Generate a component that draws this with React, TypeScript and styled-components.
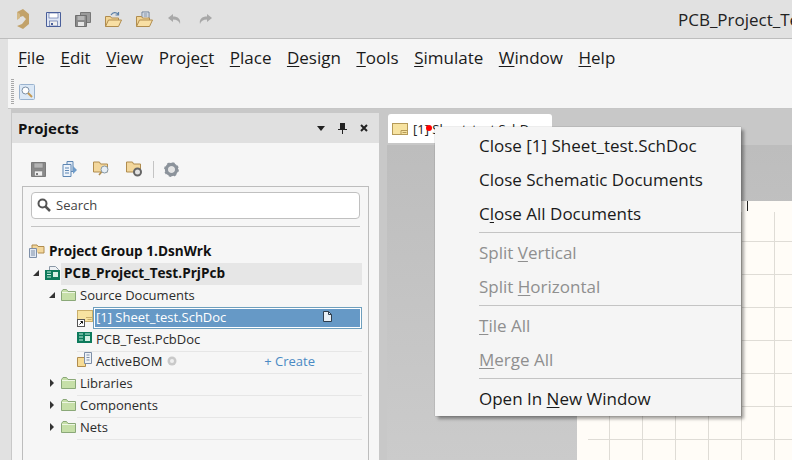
import React from 'react'
import styled, { createGlobalStyle } from 'styled-components'

const GlobalStyle = createGlobalStyle`
  html, body {
    margin: 0;
    padding: 0;
    width: 792px;
    height: 460px;
    overflow: hidden;
    background: #e1e1e1;
    font-family: 'Open Sans', 'Liberation Sans', sans-serif;
  }
  #root { width: 792px; height: 460px; }
  svg { flex: none; display: block; }
`

const Shell = styled.div`
  position: relative;
  width: 792px;
  height: 460px;
  overflow: hidden;
  display: flex;
  flex-direction: column;
  background: #e1e1e1;
`

const TitleBar = styled.div`
  height: 38px;
  flex: none;
  display: flex;
  align-items: center;
  padding-left: 16px;
  gap: 14px;
  border-bottom: 1px solid #bdbdbd;
  white-space: nowrap;
`

const Logo = styled.svg`
  margin-right: 2px;
`

const TitleText = styled.div`
  margin-left: auto;
  width: 114px;
  overflow: hidden;
  font-size: 17px;
  color: #222;
`

const MenuArea = styled.div`
  margin-left: 8px;
  height: 70px;
  flex: none;
  background: #f5f5f5;
  border-bottom: 1px solid #c6c6c6;
  box-sizing: border-box;
`

const MenuBar = styled.div`
  height: 37px;
  display: flex;
  align-items: center;
  gap: 15.5px;
  padding-left: 10px;
  font-size: 17px;
  color: #1a1a1a;
`

const MenuLabel = styled.span`
  u { text-underline-offset: 2px; }
`

const QuickBar = styled.div`
  display: flex;
  align-items: center;
  gap: 5px;
  padding: 3px 0 0 3px;
`

const Grip = styled.div`
  width: 3px;
  height: 25px;
  background: repeating-linear-gradient(to bottom, #a8a8a8 0 1px, transparent 1px 2px);
`

const Workspace = styled.div`
  flex: 1;
  display: flex;
  min-height: 0;
  margin-left: 11px;
  background: #c8c8c8;
  padding-top: 4px;
`

const Panel = styled.div`
  width: 367px;
  margin-left: 1px;
  flex: none;
  background: #f6f6f6;
  display: flex;
  flex-direction: column;
`

const PanelHeader = styled.div`
  height: 30px;
  flex: none;
  background: #e0e0e0;
  display: flex;
  align-items: center;
  padding-left: 6px;
  font-size: 15px;
  font-weight: 700;
  color: #111;
`

const PanelControls = styled.div`
  margin-left: auto;
  display: flex;
  align-items: center;
  gap: 13px;
  padding-right: 11px;
`

const PanelTools = styled.div`
  height: 43px;
  flex: none;
  display: flex;
  align-items: center;
  padding: 9px 0 0 19px;
  box-sizing: border-box;
  gap: 16px;
`

const ToolDivider = styled.div`
  width: 1px;
  height: 17px;
  background: #c4c4c4;
  margin: 0 -6px;
`

const PanelBody = styled.div`
  flex: 1;
  margin: 0 10px;
  border: 1px solid #bdbdbd;
  border-bottom: none;
  padding: 5px 8px 0;
`

const SearchBox = styled.div`
  height: 27px;
  box-sizing: border-box;
  border: 1px solid #c0c0c0;
  border-radius: 4px;
  background: #fff;
  display: flex;
  align-items: center;
  gap: 5px;
  padding: 0 0 2px 5px;
  font-size: 13px;
  color: #444;
`

const TreeRule = styled.div`
  margin-top: 7px;
  height: 1px;
  background: #c4c4c4;
`

const Tree = styled.div`
  margin: 14px -2px 0;
`

const Row = styled.div<{ $indent?: number; $bold?: boolean }>`
  height: 22px;
  display: flex;
  align-items: center;
  padding-left: ${({ $indent }) => $indent || 0}px;
  font-size: ${({ $bold }) => ($bold ? '13.6px' : '13px')};
  font-weight: ${({ $bold }) => ($bold ? 700 : 400)};
  color: ${({ $bold }) => ($bold ? '#111' : '#2b2b2b')};
`

const RowFill = styled.div<{ $shade?: boolean; $line?: boolean; $selected?: boolean; $pad?: number }>`
  flex: 1;
  height: 100%;
  display: flex;
  align-items: center;
  box-sizing: border-box;
  padding-left: ${({ $pad }) => ($pad === undefined ? 3 : $pad)}px;
  padding-bottom: 3px;
  min-width: 0;
  background: ${({ $shade, $selected }) => ($selected ? '#6699c6' : $shade ? '#e6e6e6' : 'transparent')};
  color: ${({ $selected }) => ($selected ? '#fff' : 'inherit')};
  box-shadow: ${({ $selected, $line }) =>
    $selected ? 'inset 0 0 0 1px #6e9fbd, inset 0 0 0 2px #fff' : $line ? '0 1px 0 #e6e6e6' : 'none'};
`

const Arrow = styled.span`
  width: 14px;
  margin-right: 2px;
  padding-bottom: 3px;
  flex: none;
  display: flex;
  justify-content: center;
`

const IconSlot = styled.span<{ $w?: number }>`
  width: ${({ $w }) => $w || 16}px;
  padding-bottom: 3px;
  flex: none;
  display: flex;
  align-items: center;
`

const LeafIcon = styled(IconSlot)`
  padding-bottom: 0;
`

const Hint = styled.span`
  margin-left: auto;
  padding-right: 30px;
  display: flex;
  align-items: center;
`

const HelpDot = styled.svg`
  margin-left: 5px;
`

const CreateLink = styled.span`
  margin-left: auto;
  padding-right: 47px;
  color: #4a8ac4;
`

const DocArea = styled.div`
  flex: 1;
  min-width: 0;
  margin-left: 8px;
  display: flex;
  flex-direction: column;
`

const TabStrip = styled.div`
  height: 32px;
  flex: none;
  display: flex;
  align-items: flex-start;
  padding: 1px 0 0 1px;
  box-sizing: border-box;
`

const Tab = styled.div`
  width: 164px;
  height: 29px;
  background: #fff;
  border-radius: 3px 3px 0 0;
  display: flex;
  align-items: center;
  gap: 5px;
  padding-left: 4px;
  box-sizing: border-box;
  font-size: 13px;
  color: #222;
  white-space: nowrap;
  overflow: hidden;
  position: relative;
`

const RedDot = styled.span`
  position: absolute;
  left: 38px;
  top: 11px;
  width: 6px;
  height: 6px;
  border-radius: 50%;
  background: #f00;
`

const DocBackdrop = styled.div`
  flex: 1;
  background: linear-gradient(to bottom, #bdbdbd, #cbcbcb);
  padding: 56px 0 0 190px;
  min-height: 0;
  overflow: hidden;
`

const Sheet = styled.div`
  height: 100%;
  box-sizing: border-box;
  padding: 11px 0 0 11px;
  background: #fffcf7;
  position: relative;
`

const SheetGrid = styled.div`
  height: 100%;
  background-image:
    linear-gradient(to right, #dfdcd6 1px, transparent 1px),
    linear-gradient(to bottom, #dfdcd6 1px, transparent 1px);
  background-size: 33px 33px;
  background-position: 21px 29px;
`

const Cursor = styled.span`
  position: absolute;
  left: 170px;
  top: 0;
  width: 1px;
  height: 10px;
  background: #222;
`

const ContextMenu = styled.div`
  position: absolute;
  left: 435px;
  top: 127px;
  width: 306px;
  height: 289px;
  box-sizing: border-box;
  background: #f5f5f5;
  box-shadow: 3px 3px 3px rgba(0, 0, 0, 0.35), 0 0 1px rgba(0, 0, 0, 0.4);
  padding-top: 1px;
`

const MenuItem = styled.div<{ $disabled?: boolean }>`
  height: 34px;
  display: flex;
  align-items: center;
  white-space: pre;
  padding-left: 44px;
  font-size: 17px;
  color: ${({ $disabled }) => ($disabled ? '#8f8f8f' : '#1a1a1a')};
  u { text-underline-offset: 2px; }
`

const MenuRule = styled.div`
  height: 1px;
  margin: 2px 0 2px 44px;
  background: #c4c4c4;
`

const SaveIcon = ({ color, w = 15, grey }: { color: string; w?: number; grey?: boolean }) => (
  <svg width={w} height={w} viewBox="0 0 15 15">
    <path d="M.5.5h14v14H.5z" fill={grey ? '#8a8a8a' : '#dfe6f4'} stroke={color} />
    <rect x="3" y="1" width="9" height="5" fill={grey ? '#b5b5b5' : '#fff'} stroke={color} strokeWidth=".6" />
    <rect x="3.5" y="9" width="8" height="5" fill="#efefef" stroke={color} strokeWidth=".6" />
    <rect x="5" y="11" width="2" height="2" fill={color} />
  </svg>
)

const DoubleSaveIcon = () => (
  <svg width="16" height="15" viewBox="0 0 16 15">
    <path d="M5.500.5h10v10h-10z" fill="#9a9a9a" stroke="#777" />
    <path d="M.5 3.500h11v11H.5z" fill="#8a8a8a" stroke="#6f6f6f" />
    <rect x="2.500" y="4" width="7" height="4" fill="#b5b5b5" />
    <rect x="3" y="10" width="6" height="4" fill="#e6e6e6" />
  </svg>
)

const OpenFolder = ({ badge }: { badge: 'arrow' | 'doc' }) => (
  <svg width="17" height="17" viewBox="0 0 17 17">
    {badge === 'arrow' ? (
      <path d="M6 4c2-3 5-3 7-1M13.500 1v3h-3" fill="none" stroke="#5b7fa6" strokeWidth="1.2" />
    ) : (
      <path d="M6 1h7v7H6z M7.500 3h4M7.500 5h4" fill="#eef2f8" stroke="#6c7f96" />
    )}
    <path d="M.5 15.500V5.500h5l1 1.500h7v2" fill="#f2d596" stroke="#b08c4e" />
    <path d="M.5 15.500l3-6.500h13l-3 6.500z" fill="#f8dfa4" stroke="#b08c4e" />
  </svg>
)

const GearIcon = () => (
  <svg width="15" height="15" viewBox="0 0 15 15">
    <circle cx="7.500" cy="7.500" r="5" fill="none" stroke="#8c939b" strokeWidth="3.400" />
    <circle cx="7.500" cy="7.500" r="6.300" fill="none" stroke="#8c939b" strokeWidth="2.200" strokeDasharray="2.300 2.650" />
    <circle cx="7.500" cy="7.500" r="3" fill="#e4e4e4" />
  </svg>
)

const GreenFolder = () => (
  <svg width="15" height="12" viewBox="0 0 15 12">
    <path d="M.5 11.500V2.500L2 .5h3.500L7 2.500h7.500v9z" fill="#c6dfa8" stroke="#8aa878" />
    <path d="M1 3.500h13" stroke="#eef6e4" />
  </svg>
)

const BoardIcon = () => (
  <svg width="15" height="11" viewBox="0 0 15 11">
    <rect width="15" height="11" fill="#0d7a5c" />
    <path d="M2 2h4M2 5h4M2 8h4M8 2h5" stroke="#c8efe0" strokeWidth="1" />
    <rect x="8" y="4" width="5" height="5" fill="#d6f1e6" />
  </svg>
)

const ProjectIcon = () => (
  <svg width="15" height="14" viewBox="0 0 15 14">
    <path d="M4.500.5h6l3 3v3h-9z" fill="#eef1f4" stroke="#8b98a6" />
    <rect y="4" width="15" height="10" fill="#0d7a5c" />
    <path d="M2 6h4M2 8.500h4M2 11h4" stroke="#c8efe0" />
    <rect x="8" y="6" width="5" height="5" fill="#d6f1e6" />
  </svg>
)

const Tri = ({ open }: { open?: boolean }) => (
  <svg width="7" height="8" viewBox="0 0 7 8">
    {open ? <path d="M6 1v6H0z" fill="#333" /> : <path d="M1 0l4 4-4 4z" fill="#333" />}
  </svg>
)

const SheetIcon = () => (
  <svg width="16" height="12" viewBox="0 0 16 12">
    <rect x=".5" y=".5" width="15" height="11" fill="#f7e3a1" stroke="#b59a58" />
    <path d="M9 7.500h6.500M9 7.500v4M10.500 9.500h4" stroke="#b59a58" fill="none" />
  </svg>
)

const ShortcutSheetIcon = () => (
  <svg width="16" height="17" viewBox="0 0 16 17">
    <rect x=".5" y=".5" width="15" height="11" fill="#f7e3a1" stroke="#c9ae6b" />
    <path d="M9 7.500h6.500M10.500 9.500h4" stroke="#c9ae6b" fill="none" />
    <rect x=".5" y="9.500" width="7" height="7" fill="#fff" stroke="#555" />
    <path d="M2.500 14.500l3-3M3.500 11.500h2v2" stroke="#111" fill="none" />
  </svg>
)

const MENU = [
  ['', 'F', 'ile'],
  ['', 'E', 'dit'],
  ['', 'V', 'iew'],
  ['Proje', 'c', 't'],
  ['', 'P', 'lace'],
  ['', 'D', 'esign'],
  ['', 'T', 'ools'],
  ['', 'S', 'imulate'],
  ['', 'W', 'indow'],
  ['', 'H', 'elp'],
]

const App = () => (
  <Shell>
    <GlobalStyle />
    <TitleBar>
      <Logo width="14" height="20" viewBox="0 0 14 20">
        <path d="M1 3l6-3 6 5v10l-6 5-6-3 5-2 4-5-3-3-3 1z" fill="#c2a26a" />
        <path d="M1 3l3 2v4l-3 2z" fill="#d3b987" />
      </Logo>
      <SaveIcon color="#4a5f9a" />
      <DoubleSaveIcon />
      <OpenFolder badge="arrow" />
      <OpenFolder badge="doc" />
      <svg width="16" height="12" viewBox="0 0 16 12">
        <path d="M6 1L1 5 6 9V6.500c4 0 6 1.500 7 4.500 1-5-2-7.500-7-7.500z" fill="#a8a8a8" />
      </svg>
      <svg width="16" height="12" viewBox="0 0 16 12">
        <path d="M10 1l5 4-5 4V6.500c-4 0-6 1.500-7 4.500-1-5 2-7.500 7-7.500z" fill="#a8a8a8" />
      </svg>
      <TitleText>PCB_Project_Test</TitleText>
    </TitleBar>
    <MenuArea>
      <MenuBar>
        {MENU.map(([before, key, after]) => (
          <MenuLabel key={key + after}>
            {before}
            <u>{key}</u>
            {after}
          </MenuLabel>
        ))}
      </MenuBar>
      <QuickBar>
        <Grip />
        <svg width="16" height="16" viewBox="0 0 16 16">
          <rect x=".5" y=".5" width="15" height="15" rx="1" fill="#dbe8f6" stroke="#9ab3cf" />
          <circle cx="6.500" cy="6.500" r="3.500" fill="#fff" stroke="#7b8fa6" />
          <path d="M9 9l4 4" stroke="#c69a52" strokeWidth="2" />
        </svg>
      </QuickBar>
    </MenuArea>
    <Workspace>
      <Panel>
        <PanelHeader>
          Projects
          <PanelControls>
            <svg width="8" height="5" viewBox="0 0 8 5">
              <path d="M0 0h8L4 5z" fill="#222" />
            </svg>
            <svg width="9" height="11" viewBox="0 0 9 11">
              <path d="M2 0h5v6h2v1H5v4H4V7H0V6h2z" fill="#222" />
            </svg>
            <svg width="8" height="8" viewBox="0 0 8 8">
              <path d="M1 1l6 6M7 1L1 7" stroke="#222" strokeWidth="2" />
            </svg>
          </PanelControls>
        </PanelHeader>
        <PanelTools>
          <SaveIcon color="#7b7b7b" grey />
          <svg width="15" height="16" viewBox="0 0 15 16">
            <path d="M5 .5h6v10H5z" fill="#dfe9f5" stroke="#5f87b3" />
            <path d="M1 3.500h8v12H1z" fill="#eef4fb" stroke="#5f87b3" />
            <path d="M3 7h4M3 9.500h4M3 12h4" stroke="#5f87b3" />
            <path d="M11 5l4 4-4 4z" fill="#6f9cc9" />
          </svg>
          <svg width="17" height="16" viewBox="0 0 17 16">
            <path d="M.5 11V1h6l1 2h7v8z" fill="#f3d79c" stroke="#b08c4e" />
            <circle cx="11.500" cy="8.500" r="3.500" fill="#e6eef5" stroke="#8799a6" />
            <path d="M8.500 11L6 14" stroke="#b08c4e" strokeWidth="1.500" />
          </svg>
          <svg width="17" height="16" viewBox="0 0 17 16">
            <path d="M.5 11V1h6l1 2h7v8z" fill="#f3d79c" stroke="#b08c4e" />
            <circle cx="11.500" cy="11" r="3.500" fill="#e2e2e2" stroke="#666" strokeWidth="2" />
          </svg>
          <ToolDivider />
          <GearIcon />
        </PanelTools>
        <PanelBody>
          <SearchBox>
            <svg width="14" height="14" viewBox="0 0 14 14">
              <circle cx="5.500" cy="5.500" r="4" fill="none" stroke="#555" strokeWidth="2" />
              <path d="M8.500 8.500L13 13" stroke="#555" strokeWidth="2.500" />
            </svg>
            Search
          </SearchBox>
          <TreeRule />
          <Tree>
            <Row $bold>
              <IconSlot $w={20}>
                <svg width="16" height="14" viewBox="0 0 16 14">
                  <path d="M3 5V1h5l1 1.500h6V9H9" fill="#f3d79c" stroke="#b08c4e" />
                  <path d="M.5 4.500h7v9h-7z" fill="#e2e9f3" stroke="#7e8fa8" />
                  <path d="M2 7h4M2 9h4M2 11h4" stroke="#7e8fa8" />
                </svg>
              </IconSlot>
              <RowFill $pad={0}>Project Group 1.DsnWrk</RowFill>
            </Row>
            <Row $bold>
              <Arrow><Tri open /></Arrow>
              <IconSlot><ProjectIcon /></IconSlot>
              <RowFill $shade>PCB_Project_Test.PrjPcb</RowFill>
            </Row>
            <Row $indent={16}>
              <Arrow><Tri open /></Arrow>
              <IconSlot><GreenFolder /></IconSlot>
              <RowFill>Source Documents</RowFill>
            </Row>
            <Row $indent={48}>
              <LeafIcon><ShortcutSheetIcon /></LeafIcon>
              <RowFill $selected>
                [1] Sheet_test.SchDoc
                <Hint>
                  <svg width="9" height="11" viewBox="0 0 9 11">
                    <path d="M.5.500h5l3 3v7h-8z" fill="#e8eff5" stroke="#2f3f4f" />
                    <path d="M5.500.500v3h3" fill="none" stroke="#2f3f4f" />
                  </svg>
                </Hint>
              </RowFill>
            </Row>
            <Row $indent={48}>
              <RowFill $line $pad={0}>
                <IconSlot $w={19}><BoardIcon /></IconSlot>
                PCB_Test.PcbDoc
              </RowFill>
            </Row>
            <Row $indent={48}>
              <RowFill $line $pad={0}>
                <IconSlot $w={19}>
                  <svg width="16" height="15" viewBox="0 0 16 15">
                    <path d="M.5 5.500h8v9h-8z" fill="#f7dc95" stroke="#b08c4e" />
                    <path d="M7.500.500h7v11h-7z" fill="#eef2f6" stroke="#7e8fa8" />
                    <path d="M9.500 3h3M9.500 5.500h3M9.500 8h3" stroke="#7e8fa8" />
                  </svg>
                </IconSlot>
                ActiveBOM
                <HelpDot width="10" height="10" viewBox="0 0 10 10">
                  <circle cx="5" cy="5" r="4.500" fill="#c9c9c9" />
                  <circle cx="5" cy="5" r="2" fill="#efefef" />
                </HelpDot>
                <CreateLink>+ Create</CreateLink>
              </RowFill>
            </Row>
            <Row $indent={16}>
              <Arrow><Tri /></Arrow>
              <IconSlot><GreenFolder /></IconSlot>
              <RowFill $line>Libraries</RowFill>
            </Row>
            <Row $indent={16}>
              <Arrow><Tri /></Arrow>
              <IconSlot><GreenFolder /></IconSlot>
              <RowFill $line>Components</RowFill>
            </Row>
            <Row $indent={16}>
              <Arrow><Tri /></Arrow>
              <IconSlot><GreenFolder /></IconSlot>
              <RowFill $line>Nets</RowFill>
            </Row>
          </Tree>
        </PanelBody>
      </Panel>
      <DocArea>
        <TabStrip>
          <Tab>
            <SheetIcon />
            [1] Sheet_test.SchDoc
            <RedDot />
          </Tab>
        </TabStrip>
        <DocBackdrop>
          <Sheet>
            <Cursor />
            <SheetGrid />
          </Sheet>
        </DocBackdrop>
      </DocArea>
    </Workspace>
    <ContextMenu>
      <MenuItem>Close [1] Sheet_test.SchDoc</MenuItem>
      <MenuItem>Close Schematic Documents</MenuItem>
      <MenuItem>C<u>l</u>ose All Documents</MenuItem>
      <MenuRule />
      <MenuItem $disabled>Split <u>V</u>ertical</MenuItem>
      <MenuItem $disabled>Split <u>H</u>orizontal</MenuItem>
      <MenuRule />
      <MenuItem $disabled><u>T</u>ile All</MenuItem>
      <MenuItem $disabled><u>M</u>erge All</MenuItem>
      <MenuRule />
      <MenuItem>Open In <u>N</u>ew Window</MenuItem>
    </ContextMenu>
  </Shell>
)

export default App
